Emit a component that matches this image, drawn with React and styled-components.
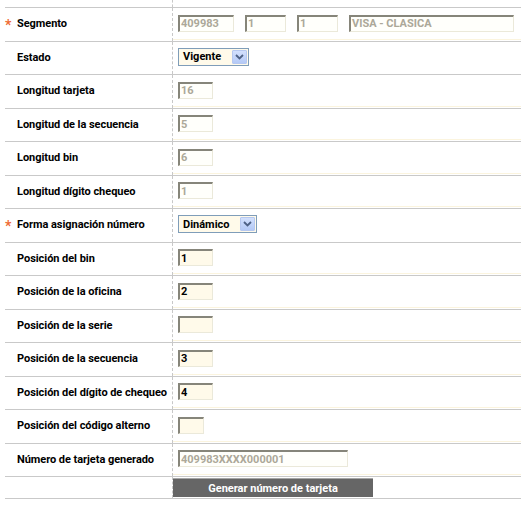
import React from 'react';
import styled, { createGlobalStyle } from 'styled-components';

const GlobalStyle = createGlobalStyle`
  html, body {
    margin: 0;
    padding: 0;
    background: #fff;
  }
  body {
    font-family: Roboto, "Liberation Sans", Arial, sans-serif;
    font-size: 11px;
    color: #000;
  }
`;

const StyledForm = styled.div`
  margin-left: 5px;
  width: 516px;
  border-bottom: 1px solid #c9c9c9;
`;

const StyledTopSpacer = styled.div`
  display: flex;
  height: 7px;
  div {
    width: 167px;
  }
  div + div {
    flex: 1;
    border-left: 1px dashed #c8c8c8;
  }
`;

const StyledRow = styled.div`
  display: flex;
  box-sizing: border-box;
  height: ${props => props.$height || '33.5px'};
  border-top: 1px solid #c9c9c9;
`;

const StyledLabel = styled.div`
  width: 167px;
  display: flex;
  align-items: center;
  padding-bottom: 1px;
  font-weight: 700;
  font-size: 11px;
  letter-spacing: -0.05px;
`;

const StyledMarker = styled.span`
  width: 12px;
  flex: none;
  color: #ee6a34;
  font-size: 14px;
  font-weight: 700;
  line-height: 11px;
  padding-top: 3px;
  box-sizing: border-box;
`;

const StyledValue = styled.div`
  flex: 1;
  display: flex;
  align-items: ${props => (props.$top ? 'flex-start' : 'center')};
  gap: 11px;
  padding-left: ${props => (props.$flush ? '0' : '5px')};
  padding-top: ${props => (props.$top ? '1px' : '0')};
  padding-bottom: ${props => (props.$top ? '0' : '2px')};
  border-left: 1px dashed #c8c8c8;
  background: ${props =>
    props.$underline
      ? 'linear-gradient(#fbf4de, #fbf4de) no-repeat left bottom 1px / 100% 1px'
      : 'none'};
`;

const StyledInput = styled.div`
  box-sizing: border-box;
  width: ${props => props.$width}px;
  height: 17px;
  display: flex;
  align-items: center;
  padding-left: 1px;
  border-top: 2px solid #86857a;
  border-left: 2px solid #86857a;
  border-right: 1px solid #ebe9da;
  border-bottom: 1px solid #ebe9da;
  background: ${props => (props.$disabled ? '#fffffb' : '#fffaea')};
  color: ${props => (props.$disabled ? '#aca899' : '#000')};
  font-weight: 700;
  font-size: 11px;
  white-space: nowrap;
  overflow: hidden;
`;

const StyledSelect = styled.div`
  box-sizing: border-box;
  width: ${props => props.$width}px;
  height: 18px;
  display: flex;
  align-items: center;
  justify-content: space-between;
  border: 1px solid #7f9db9;
  background: #fffaea;
  padding: 1px 1px 1px 4px;
  font-weight: 700;
  font-size: 11px;
`;

const StyledArrow = styled.span`
  box-sizing: border-box;
  width: 15px;
  height: 14px;
  display: flex;
  align-items: center;
  justify-content: center;
  border: 1px solid #b6c8f0;
  border-radius: 1px;
  background: linear-gradient(#d2e0fd, #b4c9f6);
`;

const StyledButton = styled.button`
  box-sizing: border-box;
  width: 200px;
  height: 19px;
  padding: 0;
  margin: 0;
  border: none;
  border-top: 1px solid #a6a6a6;
  background: #666666;
  color: #fff;
  font-family: Roboto, "Liberation Sans", Arial, sans-serif;
  font-weight: 700;
  font-size: 11px;
  cursor: pointer;
`;

const Chevron = () => (
  <svg width="9" height="6" viewBox="0 0 9 6">
    <path d="M1 1 L4.5 4.5 L8 1" fill="none" stroke="#4d6185" strokeWidth="1.8" />
  </svg>
);

const Select = ({ width, value }) => (
  <StyledSelect $width={width}>
    <span>{value}</span>
    <StyledArrow>
      <Chevron />
    </StyledArrow>
  </StyledSelect>
);

const rows = [
  {
    label: 'Segmento',
    required: true,
    inputs: [
      { width: 56, value: '409983', disabled: true },
      { width: 41, value: '1', disabled: true },
      { width: 41, value: '1', disabled: true },
      { width: 165, value: 'VISA - CLASICA', disabled: true },
    ],
  },
  { label: 'Estado', select: { width: 71, value: 'Vigente' } },
  { label: 'Longitud tarjeta', inputs: [{ width: 35, value: '16', disabled: true }] },
  { label: 'Longitud de la secuencia', inputs: [{ width: 35, value: '5', disabled: true }] },
  { label: 'Longitud bin', inputs: [{ width: 35, value: '6', disabled: true }] },
  { label: 'Longitud dígito chequeo', inputs: [{ width: 35, value: '1', disabled: true }] },
  { label: 'Forma asignación número', required: true, select: { width: 79, value: 'Dinámico' } },
  { label: 'Posición del bin', inputs: [{ width: 35, value: '1' }] },
  { label: 'Posición de la oficina', inputs: [{ width: 35, value: '2' }] },
  { label: 'Posición de la serie', inputs: [{ width: 35, value: '' }] },
  { label: 'Posición de la secuencia', inputs: [{ width: 35, value: '3' }] },
  { label: 'Posición del dígito de chequeo', inputs: [{ width: 35, value: '4' }] },
  { label: 'Posición del código alterno', inputs: [{ width: 26, value: '' }] },
  {
    label: 'Número de tarjeta generado',
    inputs: [{ width: 170, value: '409983XXXX000001', disabled: true }],
  },
];

const App = () => (
  <>
    <GlobalStyle />
    <StyledForm>
      <StyledTopSpacer>
        <div />
        <div />
      </StyledTopSpacer>
      {rows.map(row => (
        <StyledRow key={row.label}>
          <StyledLabel>
            <StyledMarker>{row.required ? '*' : ''}</StyledMarker>
            {row.label}
          </StyledLabel>
          <StyledValue $underline={!row.select}>
            {row.select && <Select width={row.select.width} value={row.select.value} />}
            {row.inputs &&
              row.inputs.map((input, i) => (
                <StyledInput key={i} $width={input.width} $disabled={input.disabled}>
                  {input.value}
                </StyledInput>
              ))}
          </StyledValue>
        </StyledRow>
      ))}
      <StyledRow $height="22px">
        <StyledLabel />
        <StyledValue $flush $top>
          <StyledButton>Generar número de tarjeta</StyledButton>
        </StyledValue>
      </StyledRow>
    </StyledForm>
  </>
);

export default App;
